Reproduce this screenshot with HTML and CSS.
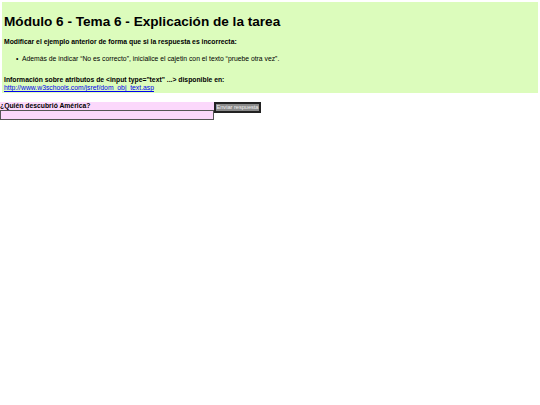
FILE: index.html
```html
<!DOCTYPE html>
<html lang="es">
<head>
<meta charset="utf-8">
<title>Módulo 6 - Tema 6</title>
<link rel="stylesheet" href="styles.css">
</head>
<body>
<div class="info">
  <h1 class="title">Módulo 6 - Tema 6 - Explicación de la tarea</h1>
  <p class="lead">Modificar el ejemplo anterior de forma que si la respuesta es incorrecta:</p>
  <ul class="list">
    <li>Además de indicar “No es correcto”, inicialice el cajetin con el texto “pruebe otra vez”.</li>
  </ul>
  <p class="ref"><b>Información sobre atributos de &lt;input type="text" ...&gt; disponible en:</b><br>
  <a href="#">http://www.w3schools.com/jsref/dom_obj_text.asp</a></p>
</div>
<form class="quiz">
  <div class="field">
    <label class="question" for="resp">¿Quién descubrió América?</label>
    <input class="answer" id="resp" type="text">
  </div>
  <button class="send" type="button">Enviar respuesta</button>
</form>
</body>
</html>
```

FILE: styles.css
```css
html, body {
  margin: 0;
  padding: 0;
  background: #ffffff;
  font-family: "Liberation Sans", Arial, sans-serif;
  color: #000000;
}
.info {
  margin: 2px;
  background: #dcfcbc;
  padding: 1px 2px 1px 2px;
  font-size: 6.8px;
  line-height: 8px;
}
.title {
  font-size: 13.6px;
  font-weight: bold;
  margin: 10px 0 8px 0;
  line-height: 17px;
}
.lead {
  font-weight: bold;
  margin: 0 0 9px 0;
}
.list {
  margin: 0 0 13px 0;
  padding-left: 12px;
  list-style: none;
}
.list li::before {
  content: "•";
  display: inline-block;
  width: 6px;
}
.ref {
  margin: 0;
}
.ref a {
  color: #0000ee;
}
.quiz {
  display: flex;
  align-items: flex-start;
  margin-top: 9px;
}
.field {
  display: flex;
  flex-direction: column;
  width: 214px;
}
.question {
  background: #fbd8fb;
  font-weight: bold;
  font-size: 6.8px;
  line-height: 8px;
}
.answer {
  box-sizing: border-box;
  height: 10px;
  margin: 0;
  padding: 0;
  border: 1px solid #555555;
  background: #fbd8fb;
}
.send {
  box-sizing: border-box;
  height: 11px;
  width: 47px;
  margin: 0;
  padding: 0;
  border: 2px solid #222222;
  background: #8a8a8a;
  color: #f0f0f0;
  font-family: "Liberation Sans", Arial, sans-serif;
  font-size: 5.6px;
  line-height: 7px;
  white-space: nowrap;
  overflow: hidden;
}
```
